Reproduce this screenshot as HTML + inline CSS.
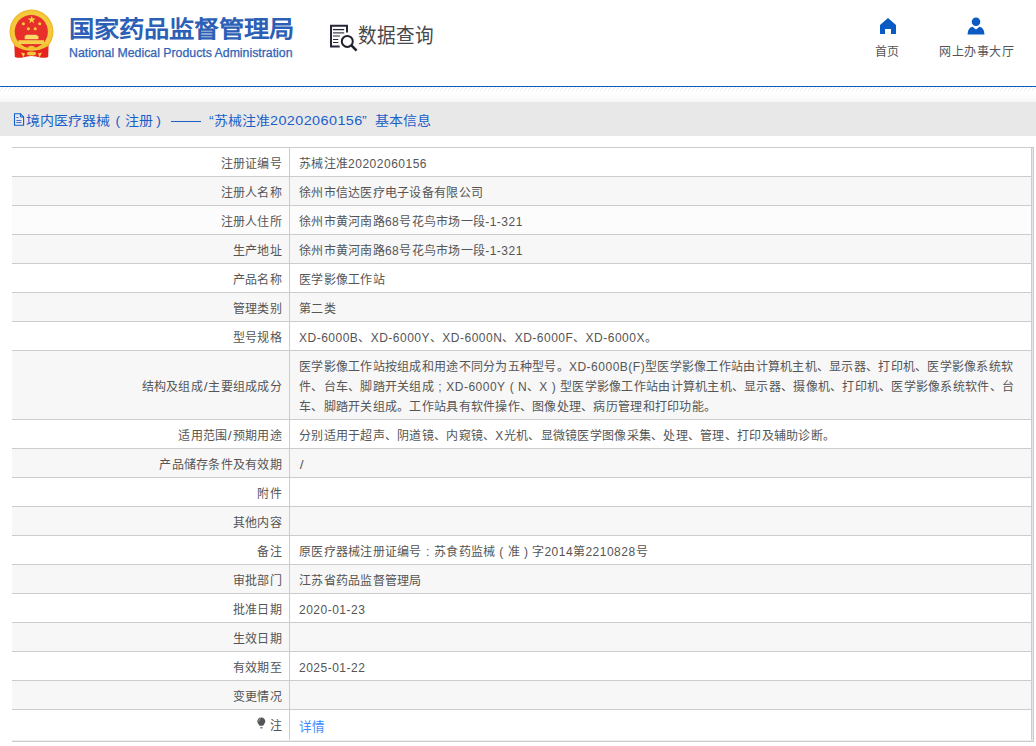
<!DOCTYPE html>
<html lang="zh-CN">
<head>
<meta charset="utf-8">
<style>
*{margin:0;padding:0;box-sizing:border-box;}
html,body{width:1036px;height:746px;overflow:hidden;background:#fff;}
body{font-family:"Liberation Sans",sans-serif;color:#555;font-size:12px;position:relative;}
.abs{position:absolute;}
#title{left:69px;top:14px;transform-origin:0 0;transform:scaleY(0.92);font-size:25.3px;font-weight:bold;color:#2c60b6;white-space:nowrap;line-height:32px;}
#en{left:69px;top:45px;font-size:12.3px;color:#3062b6;-webkit-text-stroke:0.25px #3062b6;white-space:nowrap;line-height:16px;}
#sq{left:357.5px;top:21px;transform-origin:0 0;transform:scaleY(1.1);font-size:18.6px;color:#48484c;white-space:nowrap;line-height:28px;}
.nav{font-size:12px;color:#555;white-space:nowrap;line-height:16px;}
#bl{left:0;top:86px;width:1036px;height:1px;background:#0a5ec2;}
#hatch{left:0;top:87px;width:1036px;height:4px;background:repeating-linear-gradient(135deg,#fff 0,#fff 1.9px,#e8e8e8 2.3px,#e8e8e8 2.7px,#fff 3.1px);background-size:4px 4px;}
#grad{left:0;top:92px;width:1036px;height:10px;background:linear-gradient(#fff,#f7f7f7);}
#bar{left:0;top:102px;width:1036px;height:34px;background:#e8e8e8;}
.bt{top:111px;transform-origin:0 0;transform:scaleY(0.9);font-size:14px;color:#1a5fc8;white-space:nowrap;line-height:20px;}
#tw{position:absolute;left:12px;top:147px;width:1022px;border-top:1px solid #ccc;border-right:1px solid #ccc;border-bottom:1px solid #ccc;}
#ti{border-right:1px solid #e4e7ee;border-bottom:1px solid #eceef3;}
table{width:1020px;border-collapse:separate;border-spacing:0;}
td{border-bottom:1px solid #ccc;height:29px;font-size:12px;line-height:20px;padding:5.5px 8px 2.5px 9px;vertical-align:middle;color:#555;white-space:nowrap;letter-spacing:.27px;}
.n{letter-spacing:.5px;}
.fw{display:inline-block;width:12px;text-align:center;letter-spacing:0;margin-right:.27px;}
.sl{display:inline-block;transform:scale(1.15,1.1);margin:0 .9px 0 .7px;}
td.l{width:278px;text-align:right;border-right:1px solid #ccc;padding-right:7px;}
td.v{border-right:1px solid #ccc;}
tr.g td{background:#f7f7f7;}
tr.last td{border-bottom:none;height:30px;padding-top:5px;}
</style>
</head>
<body>
<!-- emblem -->
<svg class="abs" style="left:0;top:0" width="60" height="62" viewBox="0 0 60 62">
  <path d="M14.3 44.2 L48.6 44.2 L48.2 57 Q44 58 40 57.2 Q31.5 55 23 57.2 Q19 58 14.8 57 Z" fill="#e4261e"/>
  <circle cx="31.5" cy="31.6" r="22" fill="#efb82a"/>
  <circle cx="31.5" cy="31.6" r="20.8" fill="#f5c93e"/>
  <path d="M15.5 46.5 Q31.5 55 47.5 46.5 L47.8 57 Q44 58 40 57.2 Q31.5 55 23 57.2 Q19 58 15.2 57 Z" fill="#e4261e"/>
  <circle cx="31.3" cy="31.6" r="16.6" fill="#e8302a"/>
  <rect x="25.8" y="34.8" width="11" height="1.2" fill="#f6d870"/>
  <rect x="24.7" y="35.8" width="13.7" height="3.4" fill="#f8dc6a"/>
  <rect x="18.4" y="40.2" width="25.5" height="3.9" fill="#f6d04a"/>
  <path d="M15.5 44 Q24 50 31.5 48.2 Q39 50 47.5 44" stroke="#f2c232" stroke-width="1.8" fill="none"/>
  <ellipse cx="31.5" cy="47.6" rx="3.4" ry="1.9" fill="#f2c232"/>
  <ellipse cx="31.5" cy="53.4" rx="4.6" ry="2" fill="#f2c440"/>
  <path d="M21 52.5 L25 53.5 L23.5 57.2 Z M42 52.5 L38 53.5 L39.5 57.2 Z" fill="#f4d040"/>
  <polygon points="31.7,15.8 32.7,18.6 35.6,18.6 33.3,20.4 34.1,23.2 31.7,21.5 29.3,23.2 30.1,20.4 27.8,18.6 30.7,18.6" fill="#f6d040"/>
  <circle cx="23.4" cy="23.8" r="1.5" fill="#f6d040"/>
  <circle cx="39.7" cy="23.8" r="1.5" fill="#f6d040"/>
  <circle cx="28.4" cy="28.8" r="1.5" fill="#f6d040"/>
  <circle cx="35.2" cy="28.8" r="1.5" fill="#f6d040"/>
</svg>
<div id="title" class="abs">国家药品监督管理局</div>
<div id="en" class="abs">National Medical Products Administration</div>
<!-- search doc icon -->
<svg class="abs" style="left:328px;top:22px" width="32" height="32" viewBox="0 0 32 32">
  <path d="M19 10.5 V3.8 H3 V24.6 H11.7" fill="none" stroke="#26263a" stroke-width="2"/>
  <path d="M5 7.6 H16.2" stroke="#26263a" stroke-width="1.3"/>
  <path d="M5 10.85 H16.2" stroke="#6c6c78" stroke-width="1.6"/>
  <path d="M5 14.05 H11.9 M5 17.45 H10.3 M5 20.45 H10.3" stroke="#2a2a3a" stroke-width="1.1"/>
  <circle cx="19.3" cy="19.4" r="5.5" fill="none" stroke="#22222e" stroke-width="2"/>
  <path d="M23.4 23.4 L28.6 28.6" stroke="#22222e" stroke-width="2.6"/>
</svg>
<div id="sq" class="abs">数据查询</div>
<!-- nav -->
<svg class="abs" style="left:879px;top:17px" width="18" height="18" viewBox="0 0 18 18">
  <path d="M1 8 L9 1 L17 8 V17 H12 V12 H6 V17 H1 Z" fill="#0a5cc4"/>
</svg>
<div class="abs nav" style="left:875px;top:44px">首页</div>
<svg class="abs" style="left:966px;top:16px" width="20" height="20" viewBox="0 0 20 20">
  <circle cx="10" cy="5.8" r="4.3" fill="#0a5cc4"/>
  <path d="M1.5 18.5 Q2 11.2 6.5 10.8 L10 13.6 L13.5 10.8 Q18 11.2 18.5 18.5 Z" fill="#0a5cc4"/>
</svg>
<div class="abs nav" style="left:939px;top:43.5px;letter-spacing:0.5px">网上办事大厅</div>

<div id="bl" class="abs"></div>
<div id="hatch" class="abs"></div>
<div id="grad" class="abs"></div>
<div id="bar" class="abs"></div>
<svg class="abs" style="left:13px;top:113px" width="12" height="14" viewBox="0 0 12 14">
  <path d="M1.5 0.7 H7.4 L10.6 4 V12.3 H1.5 Z" fill="none" stroke="#0d5fcc" stroke-width="1.1"/>
  <path d="M7.4 0.7 V4 H10.6" fill="none" stroke="#0d5fcc" stroke-width="1"/>
  <path d="M3.3 4.5 H5.4 M3.3 7.5 H8.4 M3.3 9.5 H8.4" stroke="#4a70c8" stroke-width="1"/>
</svg>
<div class="abs bt" style="left:26px">境内医疗器械</div>
<div class="abs bt" style="left:115.6px">(</div>
<div class="abs bt" style="left:124.5px">注册</div>
<div class="abs bt" style="left:156.2px">)</div>
<div class="abs" style="left:170.5px;top:120.5px;width:30px;height:1px;background:#1a5fc8"></div>
<div class="abs bt" style="left:209px">“</div>
<div class="abs bt" style="left:214px">苏械注准<span style="font-size:14.4px;letter-spacing:.42px">20202060156</span></div>
<div class="abs bt" style="left:362px">”</div>
<div class="abs bt" style="left:374.5px">基本信息</div>

<div id="tw"><div id="ti"><table>
<tr><td class="l">注册证编号</td><td class="v">苏械注准<span class=n>20202060156</span></td></tr>
<tr class="g"><td class="l">注册人名称</td><td class="v">徐州市信达医疗电子设备有限公司</td></tr>
<tr style="background:#fcfcfc"><td class="l">注册人住所</td><td class="v">徐州市黄河南路<span class=n>68</span>号花鸟市场一段<span class=n>-1-321</span></td></tr>
<tr class="g"><td class="l">生产地址</td><td class="v">徐州市黄河南路<span class=n>68</span>号花鸟市场一段<span class=n>-1-321</span></td></tr>
<tr><td class="l">产品名称</td><td class="v">医学影像工作站</td></tr>
<tr class="g"><td class="l">管理类别</td><td class="v">第二类</td></tr>
<tr><td class="l">型号规格</td><td class="v"><span class=n>XD-6000B</span>、<span class=n>XD-6000Y</span>、<span class=n>XD-6000N</span>、<span class=n>XD-6000F</span>、<span class=n>XD-6000X</span>。</td></tr>
<tr class="g"><td class="l">结构及组成<span class="n sl">/</span>主要组成成分</td><td class="v">医学影像工作站按组成和用途不同分为五种型号。<span class=n>XD-6000B(F)</span>型医学影像工作站由计算机主机、显示器、打印机、医学影像系统软<br>件、台车、脚踏开关组成<span class="fw">;</span><span class=n>XD-6000Y</span><span class="fw">(</span><span class=n>N</span>、<span class=n>X</span><span class="fw">)</span>型医学影像工作站由计算机主机、显示器、摄像机、打印机、医学影像系统软件、台<br>车、脚踏开关组成。工作站具有软件操作、图像处理、病历管理和打印功能。</td></tr>
<tr><td class="l">适用范围<span class="n sl">/</span>预期用途</td><td class="v">分别适用于超声、阴道镜、内窥镜、<span class=n>X</span>光机、显微镜医学图像采集、处理、管理、打印及辅助诊断。</td></tr>
<tr class="g"><td class="l">产品储存条件及有效期</td><td class="v"><span class="n sl">/</span></td></tr>
<tr><td class="l">附件</td><td class="v"></td></tr>
<tr class="g"><td class="l">其他内容</td><td class="v"></td></tr>
<tr><td class="l">备注</td><td class="v">原医疗器械注册证编号<span class="fw">:</span>苏食药监械<span class="fw">(</span>准<span class="fw">)</span>字<span class=n>2014</span>第<span class=n>2210828</span>号</td></tr>
<tr class="g"><td class="l">审批部门</td><td class="v">江苏省药品监督管理局</td></tr>
<tr><td class="l">批准日期</td><td class="v"><span class=n>2020-01-23</span></td></tr>
<tr class="g"><td class="l">生效日期</td><td class="v"></td></tr>
<tr><td class="l">有效期至</td><td class="v"><span class=n>2025-01-22</span></td></tr>
<tr class="g"><td class="l">变更情况</td><td class="v"></td></tr>
<tr class="last"><td class="l"><svg style="display:inline-block;vertical-align:top;margin:1px 3.5px 0 0" width="9" height="12" viewBox="0 0 9 12"><path d="M4.3 0.4 C1.8 0.4 0.3 2.2 0.3 4.3 C0.3 6.2 1.7 7.2 2.5 8.8 H6.1 C6.9 7.2 8.3 6.2 8.3 4.3 C8.3 2.2 6.8 0.4 4.3 0.4 Z" fill="#555"/><path d="M1.8 4.4 Q1.8 2.4 3.6 1.7" stroke="#aab" stroke-width="0.9" fill="none"/><rect x="3.2" y="10.2" width="2.4" height="1.2" fill="#666"/></svg>注</td><td class="v" style="color:#3d8bff;font-size:12.6px;padding-top:6.5px;padding-bottom:3.5px;">详情</td></tr>
</table></div></div>
</body>
</html>
